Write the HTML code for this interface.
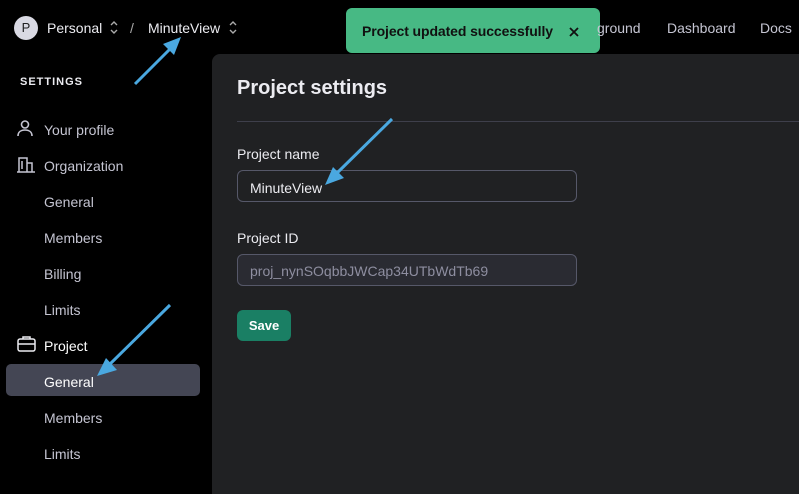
<!DOCTYPE html>
<html><head><style>
*{margin:0;padding:0;box-sizing:border-box}
body{width:799px;height:484px;background:#000;font-family:"Liberation Sans",sans-serif;position:relative;overflow:hidden;color:#ececf1}
.a{position:absolute;white-space:nowrap}
.nav{font-size:14px;color:#c5c5d2}
.side{font-size:14px;color:#c5c5d2}
</style></head><body>
<div class="a" style="left:14px;top:16px;width:24px;height:24px;border-radius:50%;background:#d9d9e3;color:#202123;font-size:13px;text-align:center;line-height:24px">P</div>
<div class="a" style="left:47px;top:20px;font-size:14px;color:#ececf1">Personal</div>
<svg class="a" style="left:109px;top:20px" width="10" height="15" fill="none" stroke="#aaa" stroke-width="1.4"><path d="M2 5l3-3 3 3M2 10l3 3 3-3"/></svg>
<div class="a" style="left:130px;top:20px;font-size:14px;color:#aaa">/</div>
<div class="a" style="left:148px;top:20px;font-size:14px;color:#ececf1">MinuteView</div>
<svg class="a" style="left:228px;top:20px" width="10" height="15" fill="none" stroke="#aaa" stroke-width="1.4"><path d="M2 5l3-3 3 3M2 10l3 3 3-3"/></svg>
<div class="a" style="left:346px;top:8px;width:254px;height:45px;background:#47b984;border-radius:6px"></div>
<div class="a nav" style="left:597px;top:20px">ground</div>
<div class="a nav" style="left:667px;top:20px">Dashboard</div>
<div class="a nav" style="left:760px;top:20px">Docs</div>
<div class="a" style="left:362px;top:23px;font-size:14px;font-weight:bold;color:#111;letter-spacing:-0.1px">Project updated successfully</div>
<svg class="a" style="left:569px;top:27px" width="10" height="10" stroke="#111" stroke-width="1.8"><path d="M1 1l8 8M9 1l-8 8"/></svg>

<div class="a" style="left:20px;top:76px;font-size:11px;font-weight:bold;letter-spacing:1px;color:#ececf1">SETTINGS</div>
<svg class="a" style="left:16px;top:119px" width="18" height="18" fill="none" stroke="#c5c5d2" stroke-width="1.6"><circle cx="9" cy="5.5" r="3.5"/><path d="M2 17c0-4 3-6 7-6s7 2 7 6"/></svg>
<div class="a side" style="left:44px;top:122px">Your profile</div>
<svg class="a" style="left:16px;top:156px" width="20" height="17" fill="none" stroke="#c5c5d2" stroke-width="1.5"><path d="M1 16h18M3 16V2h8v14M11 7h5v9M6 5v8"/></svg>
<div class="a side" style="left:44px;top:158px">Organization</div>
<div class="a side" style="left:44px;top:194px">General</div>
<div class="a side" style="left:44px;top:230px">Members</div>
<div class="a side" style="left:44px;top:266px">Billing</div>
<div class="a side" style="left:44px;top:302px">Limits</div>
<svg class="a" style="left:17px;top:335px" width="19" height="17" fill="none" stroke="#ececf1" stroke-width="1.5"><rect x="1" y="4" width="17" height="12" rx="2"/><path d="M6 4V2h7v2M1 9h17"/></svg>
<div class="a side" style="left:44px;top:338px;color:#fff">Project</div>
<div class="a" style="left:6px;top:364px;width:194px;height:32px;background:#444654;border-radius:5px"></div>
<div class="a side" style="left:44px;top:374px;color:#fff">General</div>
<div class="a side" style="left:44px;top:410px">Members</div>
<div class="a side" style="left:44px;top:446px">Limits</div>

<div class="a" style="left:212px;top:54px;width:600px;height:440px;background:#202123;border-top-left-radius:8px"></div>
<div class="a" style="left:237px;top:77px;font-size:20px;font-weight:bold;color:#ececf1">Project settings</div>
<div class="a" style="left:237px;top:121px;width:562px;height:1px;background:#3e3f4b"></div>
<div class="a" style="left:237px;top:146px;font-size:14px;color:#ececf1">Project name</div>
<div class="a" style="left:237px;top:170px;width:340px;height:32px;border:1px solid #565869;border-radius:6px;background:#202123"></div>
<div class="a" style="left:250px;top:180px;font-size:14px;color:#ececf1">MinuteView</div>
<div class="a" style="left:237px;top:230px;font-size:14px;color:#ececf1">Project ID</div>
<div class="a" style="left:237px;top:254px;width:340px;height:32px;border:1px solid #565869;border-radius:6px;background:#2a2b32"></div>
<div class="a" style="left:250px;top:263px;font-size:14px;color:#8e8ea0">proj_nynSOqbbJWCap34UTbWdTb69</div>
<div class="a" style="left:237px;top:310px;width:54px;height:31px;background:#1a7f64;border-radius:6px;color:#fff;font-size:13px;font-weight:bold;text-align:center;line-height:31px">Save</div>

<svg class="a" style="left:0;top:0" width="799" height="484">
<g stroke="#4aa8e0" stroke-width="3" fill="#4aa8e0">
<line x1="135" y1="84" x2="172" y2="47"/><polygon points="181,37 163,44 174,55" stroke="none"/>
<line x1="392" y1="119" x2="335" y2="175"/><polygon points="325,185 344,178 333,167" stroke="none"/>
<line x1="170" y1="305" x2="108" y2="366"/><polygon points="97,376 117,370 106,358" stroke="none"/>
</g></svg>
</body></html>
